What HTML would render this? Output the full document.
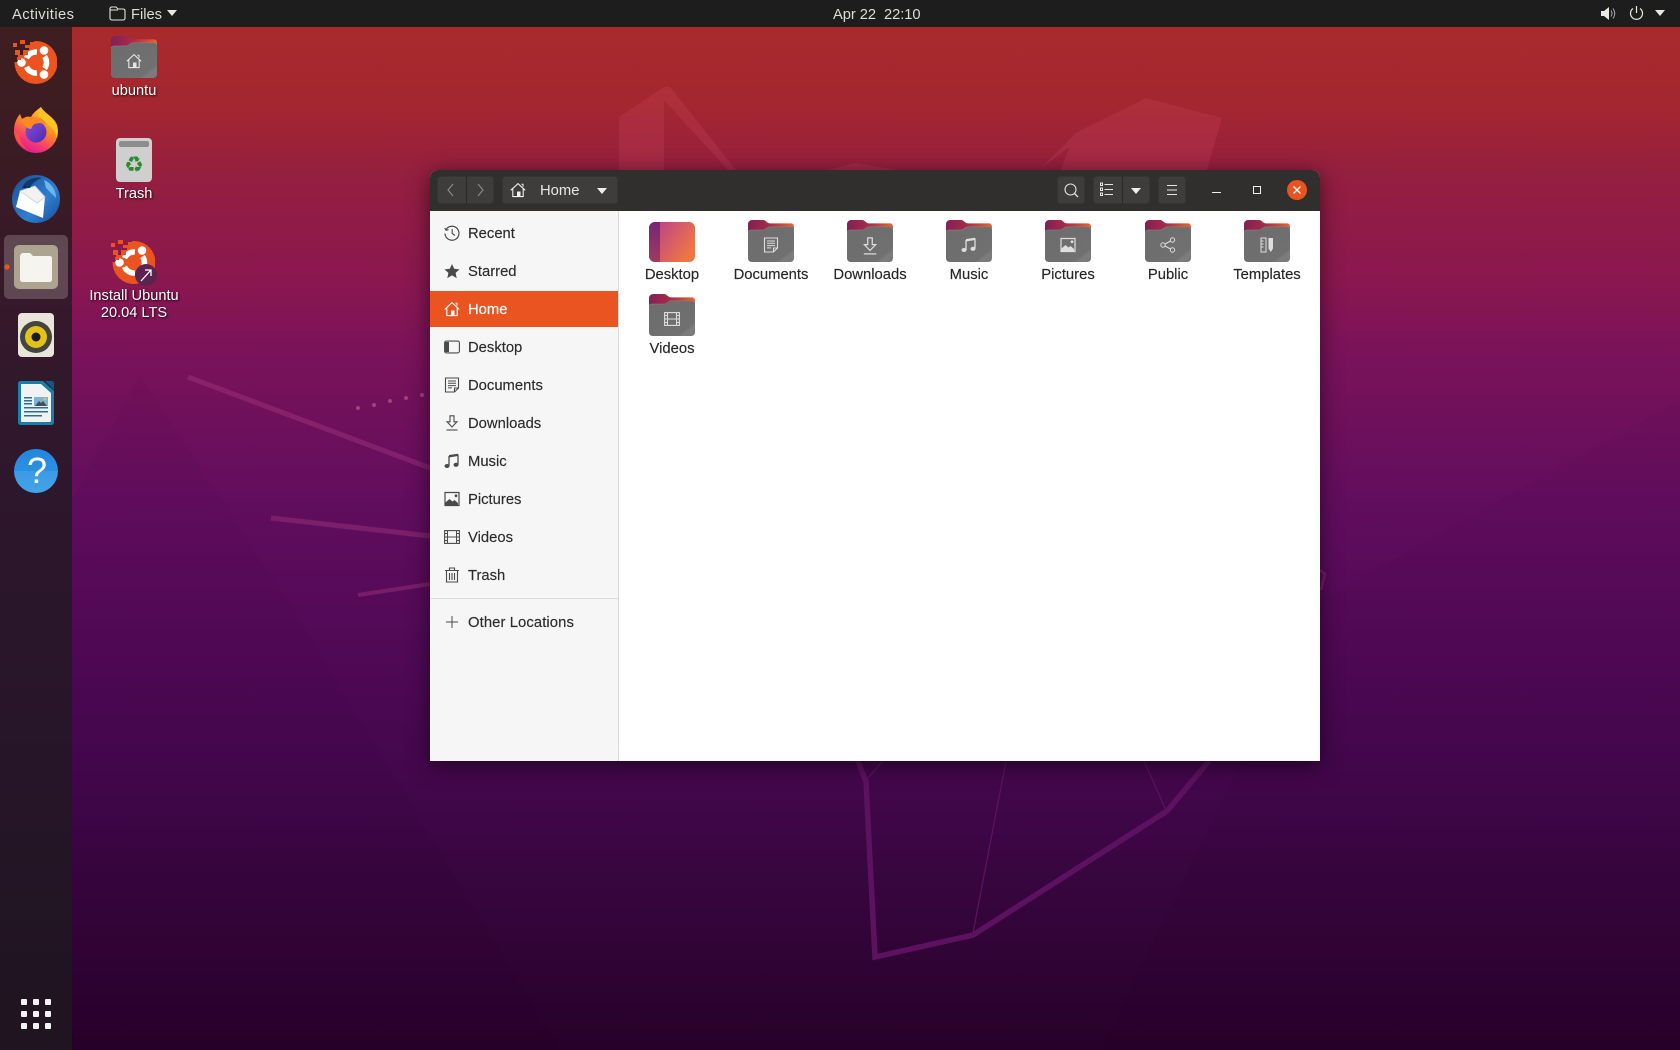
<!DOCTYPE html>
<html><head><meta charset="utf-8"><title>Ubuntu 20.04 Files</title>
<style>
html,body{margin:0;padding:0;width:1680px;height:1050px;overflow:hidden;background:#3a0540}
body{position:relative;font-family:"Liberation Sans",sans-serif;font-size:14.8px}
#wall{position:absolute;left:0;top:0}
.a{position:absolute}
.t{position:absolute;white-space:pre;line-height:18px}
.top{position:absolute;left:0;top:0;width:1680px;height:27px;background:#1d1d1d;color:#dcdcd8}
.top .t{top:6px;font-size:14.7px}
.dl{position:absolute;width:120px;text-align:center;color:#fff;line-height:17px;text-shadow:1px 1px 2px rgba(0,0,0,.85);font-size:14.6px}
#win{position:absolute;left:430px;top:170px;width:890px;height:591px;border-radius:8px 8px 0 0;box-shadow:0 4px 22px rgba(0,0,0,.55);background:#fff}
#hb{position:absolute;left:0;top:0;width:890px;height:41px;background:#302f2e;border-radius:8px 8px 0 0}
.btn{position:absolute;top:6px;height:28px;background:#3e3d3b;border-radius:4px;box-shadow:inset 0 0 0 1px #373635}
#side{position:absolute;left:0;top:41px;width:188px;height:550px;background:#f6f6f6;border-right:1px solid #d9d9d9}
.row{position:absolute;left:0;width:188px;height:38px;color:#2c2c2c;-webkit-text-stroke:.15px}
.row svg{position:absolute;left:14px;top:11px;width:16px;height:16px;color:#4a4a4a}
.row span{position:absolute;left:38px;top:10.500px;line-height:18px;white-space:pre}
.sel{background:#e95420;color:#fff;height:36px;margin-top:1px}
.sel span{top:9.500px}
.sel svg{color:#fff;top:10px}
.lab{position:absolute;width:100px;text-align:center;color:#262626;line-height:18px;-webkit-text-stroke:.15px}
</style></head><body>
<svg width="0" height="0" style="position:absolute">
<defs>
<linearGradient id="tab" x1="0" x2="1" y1="0" y2="0"><stop offset="0" stop-color="#7f2156"/><stop offset=".45" stop-color="#a82a48"/><stop offset="1" stop-color="#e9642a"/></linearGradient>
<linearGradient id="fr" x1="0" x2="1" y1="0" y2="1"><stop offset="0" stop-color="#6c6c6c"/><stop offset=".8" stop-color="#707070"/><stop offset=".86" stop-color="#7d7d7d"/><stop offset="1" stop-color="#777"/></linearGradient>
<linearGradient id="dk" x1="0" x2="1" y1="0" y2=".6"><stop offset="0" stop-color="#b13d92"/><stop offset="1" stop-color="#f17543"/></linearGradient>
<linearGradient id="dk2" x1="0" x2="0" y1="0" y2="1"><stop offset="0" stop-color="#742675"/><stop offset="1" stop-color="#a03a60"/></linearGradient>
<symbol id="folder" viewBox="0 0 46 42">
<path d="M4 0H15C18 0 19 3.4 22 3.4H43C45 3.4 46 5 46 7V20H0V4C0 2 2 0 4 0Z" fill="url(#tab)"/>
<path d="M0 12.5C0 11 1.5 10 3 10H15C18 10 19 6.8 22 6.8H43C45 6.8 46 8 46 10V38C46 40.5 44.5 42 42 42H4C1.5 42 0 40.5 0 38Z" fill="url(#fr)"/>
<path d="M0 12.5C0 11 1.5 10 3 10H15C18 10 19 6.8 22 6.8H43C45 6.8 46 8 46 10" fill="none" stroke="#8a8a8a" stroke-width=".7" opacity=".7"/>
</symbol>
<symbol id="i-home" viewBox="0 0 16 16"><path d="M.8 8.300 8 1.600l7.200 6.700M2.800 6.600v8h10.400v-8" fill="none" stroke="currentColor" stroke-width="1.100"/><rect x="7" y="9.500" width="3.500" height="5" fill="currentColor"/><path d="M11.500 2.300h1.500v2.500" fill="none" stroke="currentColor"/></symbol>
<symbol id="i-recent" viewBox="0 0 16 16"><path d="M2.200 4.300A7 7 0 1 1 1 8.500" fill="none" stroke="currentColor" stroke-width="1.200"/><path d="M.8 3 2 5.200 4.500 4.700M8.200 4v4.500l2.800 2" fill="none" stroke="currentColor" stroke-width="1.100"/></symbol>
<symbol id="i-star" viewBox="0 0 16 16"><path d="M8 1l2.200 4.800 5.300.6-3.900 3.500 1.100 5.200L8 12.400l-4.700 2.700 1.100-5.200L.5 6.400l5.300-.6z" fill="currentColor"/></symbol>
<symbol id="i-desk" viewBox="0 0 16 16"><rect x=".6" y="2.100" width="14.800" height="11.800" rx="1.800" fill="none" stroke="currentColor" stroke-width="1.100"/><path d="M1 3h4v10H1z" fill="currentColor"/></symbol>
<symbol id="i-doc" viewBox="0 0 16 16"><path d="M1.500 1h13v10l-4 4h-9zM14.500 11h-4v4" fill="none" stroke="currentColor" stroke-width="1.100"/><path d="M4 4h8M4 6.300h8M4 8.600h8M4 10.900h4" stroke="currentColor" stroke-width="1"/></symbol>
<symbol id="i-down" viewBox="0 0 16 16"><path d="M6 .8h4v6h3L8 12 3 6.800h3z" fill="none" stroke="currentColor" stroke-width="1.100"/><path d="M2.500 15h11" stroke="currentColor" stroke-width="1.100"/></symbol>
<symbol id="i-music" viewBox="0 0 16 16"><path d="M5 3v10M14 1.500V11.500M5 3.500 14 2" stroke="currentColor" stroke-width="1.300" fill="none"/><path d="M5 2 14 .8V3L5 4.500z" fill="currentColor"/><ellipse cx="3" cy="13" rx="2.500" ry="2" fill="currentColor"/><ellipse cx="12" cy="11.800" rx="2.500" ry="2" fill="currentColor"/></symbol>
<symbol id="i-pic" viewBox="0 0 16 16"><path d="M1 1.500h14v13H1z" fill="none" stroke="currentColor" stroke-width="1.200"/><path d="M1.500 14V11.500l4-3.500 3 2.500 2-1.500 3.500 3v2z" fill="currentColor"/><circle cx="12" cy="4.800" r="1.400" fill="currentColor"/></symbol>
<symbol id="i-vid" viewBox="0 0 16 16"><rect x=".6" y="1.600" width="14.800" height="12.800" fill="none" stroke="currentColor" stroke-width="1.100"/><path d="M3.500 1.600v12.800M12.500 1.600v12.800M3.500 8h9M.6 4.500h3M.6 8h3M.6 11.500h3M12.500 4.500h3M12.500 8h3M12.500 11.500h3" stroke="currentColor" fill="none"/></symbol>
<symbol id="i-trash" viewBox="0 0 16 16"><path d="M2.500 4v11h11V4M1 3.500h14M5.500 3.300V1h5v2.300M5.500 6v7M8 6v7M10.500 6v7" fill="none" stroke="currentColor" stroke-width="1.100"/></symbol>
<symbol id="i-share" viewBox="0 0 16 16"><g fill="none" stroke="currentColor" stroke-width="1"><circle cx="12.500" cy="3" r="2.200"/><circle cx="12.500" cy="13" r="2.200"/><circle cx="3" cy="8" r="2.200"/><path d="M5 7l5.600-3M5 9l5.600 3"/></g></symbol>
<symbol id="i-tpl" viewBox="0 0 16 16"><rect x="2" y="1" width="5" height="14" fill="none" stroke="currentColor"/><path d="M2 4h2.500M2 7h2.500M2 10h2.500" stroke="currentColor"/><path d="M9.500 1h4.500v10.500l-2.200 3.500-2.300-3.500z" fill="currentColor"/></symbol>
<symbol id="ubu" viewBox="0 0 44 44">
<mask id="um"><rect width="44" height="44" fill="#fff"/><path d="M0 0H21V5H16V10H10V15H5V22H0Z" fill="#000"/></mask>
<circle cx="23" cy="22.500" r="21.500" fill="#e95420" mask="url(#um)"/>
<g fill="none" stroke="#fff" stroke-width="5.500"><path d="M31.600 16.500A10.500 10.500 0 0 1 31.600 28.500"/><path d="M23.900 33A10.500 10.500 0 0 1 13.500 26.900"/><path d="M13.500 18.100A10.500 10.500 0 0 1 23.900 12"/></g>
<g fill="#fff"><circle cx="31" cy="10.500" r="4.300"/><circle cx="8.500" cy="22.500" r="4.300"/><circle cx="31" cy="34.500" r="4.300"/></g>
<g fill="#e95420"><rect x="0" y="3" width="4" height="4"/><rect x="7" y="0" width="5" height="4"/><rect x="17" y="2" width="5" height="4"/><rect x="2" y="10" width="5" height="5"/><rect x="10" y="10" width="5" height="5"/><rect x="4" y="17" width="4" height="3"/><rect x="12" y="5" width="4" height="3"/></g>
</symbol>
<linearGradient id="ffb" x1=".8" y1="0" x2=".3" y2="1"><stop offset="0" stop-color="#ffd02e"/><stop offset=".45" stop-color="#ff8a1e"/><stop offset=".8" stop-color="#f2327c"/><stop offset="1" stop-color="#d31f8a"/></linearGradient>
<linearGradient id="ffp" x1="0" x2="1" y1="0" y2="1"><stop offset="0" stop-color="#8a4bd8"/><stop offset="1" stop-color="#4a2bb0"/></linearGradient>
<linearGradient id="tb" x1="0" x2="1" y1="0" y2="1"><stop offset="0" stop-color="#1a4c8c"/><stop offset=".6" stop-color="#2f7fd0"/><stop offset="1" stop-color="#174a96"/></linearGradient>
<linearGradient id="hp" x1="0" x2="0" y1="0" y2="1"><stop offset="0" stop-color="#2287de"/><stop offset=".5" stop-color="#2c90e0"/><stop offset=".5" stop-color="#3c9ae4"/><stop offset="1" stop-color="#43a4e8"/></linearGradient>
<linearGradient id="wg" x1="0" x2="0" y1="0" y2="1">
<stop offset="0" stop-color="#ab2c2c"/><stop offset=".1" stop-color="#a4262f"/><stop offset=".165" stop-color="#951f3f"/><stop offset=".27" stop-color="#8a1750"/><stop offset=".33" stop-color="#7b1359"/><stop offset=".48" stop-color="#610d5e"/><stop offset=".62" stop-color="#500956"/><stop offset=".74" stop-color="#43074c"/><stop offset=".87" stop-color="#34053a"/><stop offset="1" stop-color="#27012a"/>
</linearGradient>
</defs>
</svg>

<svg id="wall" width="1680" height="1050" viewBox="0 0 1680 1050">
<rect width="1680" height="1050" fill="url(#wg)"/>
<g fill="#000" opacity=".018"><path d="M72 500 140 375 300 620 560 1050 72 1050Z"/><path d="M1320 600 1680 400V1050H1100Z"/></g>
<g fill="#d8506a" opacity=".2"><path d="M619 117 664 87 664 170 619 170Z"/><path d="M664 87 670 87 736 170 728 170 664 100Z"/><path d="M1146 98 1222 118 1207 170 1061 170 1069 147 1039 170 1077 132Z"/><path d="M855 163 897 170 828 170Z"/></g>
<g fill="none" stroke="#a63a80" opacity=".42"><path d="M188 377 430 468" stroke-width="5"/><path d="M271 518 430 536" stroke-width="5"/><path d="M358 595 430 584" stroke-width="4"/></g>
<g fill="#c05a90" opacity=".65"><circle cx="358" cy="408" r="2"/><circle cx="374" cy="405" r="2"/><circle cx="390" cy="401" r="2"/><circle cx="406" cy="398" r="2"/><circle cx="422" cy="395" r="2"/></g>
<g fill="none" stroke="#5c1260"><path d="M858 761 866 782 875 957 973 935 1167 811 1209 761" stroke-width="5.500" stroke-linejoin="miter"/><path d="M972 938 1006 761" stroke-width="1.300"/><path d="M1166 810 1144 761" stroke-width="1.300"/><path d="M866 780 883 761" stroke-width="1.300"/></g>
<path d="M1320 570 1325 574 1321 590" fill="none" stroke="#8a2a70" stroke-width="2.500" opacity=".6"/>
<!-- dock -->
<rect x="0" y="27" width="72" height="1023" fill="#1d1a1d" fill-opacity=".76"/>
<use href="#ubu" x="13" y="40" width="44" height="44"/>
<!-- firefox -->
<g>
<path d="M58 131A22 22 0 0 1 14 131C14 124 16 119 20 114L22 119C25 117 28 116 31 117 33 113 37 110 41 107 43 112 50 115 54 120 57 123 58 127 58 131Z" fill="url(#ffb)"/>
<path d="M41 107c3 6 12 9 15 18 2 5 2 9 1 13-2-8-8-14-15-17-4-2-5-8-1-14z" fill="#ffc426"/>
<circle cx="36" cy="132" r="10.500" fill="url(#ffp)"/>
<path d="M21 121c5-4 14-6 21-2 3 2 4 4 4 6-5-3-10-2-13 0l-2 4c-3 0-7-3-10-8z" fill="#ff8a24"/>
<path d="M14 131c0 8 6 15 14 19-6-5-9-10-8-15z" fill="#ff5a2a" opacity=".8"/>
</g>
<!-- thunderbird -->
<g>
<circle cx="36" cy="199" r="24" fill="url(#tb)"/>
<path d="M44 180c7 3 12 10 12 18-4-4-8-8-10-10z" fill="#6cb6ef"/>
<path d="M20 191l25 6-2 21-27-11z" fill="#fff"/>
<path d="M20 191l15-5 10 11-8 6z" fill="#f2f2f2" stroke="#c9d2dc" stroke-width=".8"/>
<path d="M22 188c2-7 12-12 20-10-6 2-11 6-12 10z" fill="#0e3a70"/>
<circle cx="25" cy="187" r="1" fill="#123"/>
</g>
<!-- files -->
<rect x="4" y="235" width="64" height="64" rx="5" fill="#fff" opacity=".2"/>
<circle cx="7" cy="267" r="2.700" fill="#e95420"/>
<rect x="14" y="245" width="44" height="44" rx="5" fill="#aca48f"/>
<path d="M20 257c0-2 1-4 3-4h7l3 3h17c1 0 2 1 2 2v21c0 2-1 3-3 3H23c-2 0-3-1-3-3z" fill="#f6f4ef"/>
<!-- rhythmbox -->
<rect x="18" y="313" width="36" height="44" rx="4" fill="#e9e5da"/>
<circle cx="36" cy="337" r="16" fill="#45453f"/><circle cx="36" cy="337" r="11" fill="#e3c118"/><circle cx="36" cy="337" r="4.500" fill="#1a1a1a"/>
<!-- writer -->
<path d="M21 381h22l11 10v31c0 2-1 3-3 3H21c-2 0-3-1-3-3v-38c0-2 1-3 3-3z" fill="#1a7ea6"/>
<path d="M21 384h20l10 9v27c0 2-1 2-2 2H22c-1 0-1-1-1-2z" fill="#f1f3f3"/>
<path d="M45 381h7c1 0 2 1 2 2v7z" fill="#0f5c83"/>
<g fill="#2a6d96"><rect x="24" y="397" width="8" height="1.500"/><rect x="24" y="400" width="8" height="1.500"/><rect x="24" y="403" width="8" height="1.500"/><rect x="24" y="407" width="24" height="1.500"/><rect x="24" y="411" width="24" height="1.500"/><rect x="24" y="415" width="18" height="1.500"/></g>
<rect x="34" y="397" width="14" height="9" fill="#7db4d6"/><path d="M35 406l4-5 2 2 2-2 4 5z" fill="#454d55"/><circle cx="45" cy="399" r="1.300" fill="#f0c040"/>
<!-- help -->
<circle cx="36" cy="471" r="22" fill="url(#hp)"/>
<g fill="#f4f2f4"><rect x="21" y="999" width="6" height="6" rx="1"/><rect x="33" y="999" width="6" height="6" rx="1"/><rect x="45" y="999" width="6" height="6" rx="1"/><rect x="21" y="1011" width="6" height="6" rx="1"/><rect x="33" y="1011" width="6" height="6" rx="1"/><rect x="45" y="1011" width="6" height="6" rx="1"/><rect x="21" y="1023" width="6" height="6" rx="1"/><rect x="33" y="1023" width="6" height="6" rx="1"/><rect x="45" y="1023" width="6" height="6" rx="1"/></g>
<!-- desktop icons -->
<use href="#folder" x="111" y="36" width="46" height="42"/>
<use href="#i-home" x="126" y="53" width="16" height="16" style="color:#e4e4e4"/>
<rect x="116" y="138" width="36" height="44" rx="4" fill="#cfcfcf"/>
<rect x="119" y="141" width="30" height="6" rx="2" fill="#8d8d8d"/>
<use href="#ubu" x="111" y="240" width="44" height="44"/>
<circle cx="146" cy="275" r="11" fill="#5b2450"/>
<path d="M141 281 151 270M145 270h6v6" fill="none" stroke="#fff" stroke-width="1.300"/>
</svg>

<div class="a" style="left:1px;top:450px;width:72px;text-align:center;color:#fff;font-size:36px;line-height:42px">?</div>
<div class="a" style="left:114px;top:152px;width:40px;text-align:center;color:#2a8a30;font:22px/28px 'DejaVu Sans',sans-serif">♻</div>

<div class="top">
<div class="t" style="left:12px;letter-spacing:.45px">Activities</div>
<svg class="a" style="left:109px;top:5px" width="17" height="16"><path d="M1 4c0-1 .6-2 2-2h4l2 2h5c1.500 0 2 1 2 2v7c0 1-.7 2-2 2H3c-1.300 0-2-1-2-2z" fill="none" stroke="#e4e4e0" stroke-width="1.100"/><path d="M1 5h8" stroke="#e4e4e0"/></svg>
<div class="t" style="left:131px">Files</div>
<svg class="a" style="left:167px;top:10px" width="10" height="6"><path d="M0 0h10L5 6z" fill="#e8e8e4"/></svg>
<div class="t" style="left:833px;letter-spacing:-.05px">Apr 22  22:10</div>
<svg class="a" style="left:1601px;top:6px" width="16" height="15"><path d="M0 5h3l5-4v13L3 10H0z" fill="#e8e8e4"/><path d="M10 4.500q2 3 0 6M12 2.500q3.500 5 0 10" stroke="#aaa" fill="none"/></svg>
<svg class="a" style="left:1629px;top:5px" width="15" height="16"><path d="M4 3.500a6 6 0 1 0 7 0M7.500 1v7" fill="none" stroke="#e8e8e4" stroke-width="1.200"/></svg>
<svg class="a" style="left:1655px;top:10px" width="10" height="6"><path d="M0 0h10L5 6z" fill="#e8e8e4"/></svg>
</div>

<div class="dl" style="left:74px;top:83px">ubuntu</div>
<div class="dl" style="left:74px;top:186px">Trash</div>
<div class="dl" style="left:74px;top:288px">Install Ubuntu<br>20.04 LTS</div>

<div id="win">
<div id="hb">
<div class="btn" style="left:7px;width:57px"></div>
<div class="a" style="left:36px;top:6px;width:1px;height:28px;background:#2a2928"></div>
<svg class="a" style="left:15px;top:13px" width="12" height="14"><path d="M8 1 3 7l5 6" fill="none" stroke="#8a8a88" stroke-width="1.100"/></svg>
<svg class="a" style="left:44px;top:13px" width="12" height="14"><path d="M4 1l5 6-5 6" fill="none" stroke="#8a8a88" stroke-width="1.100"/></svg>
<div class="btn" style="left:72px;width:116px"></div>
<svg class="a" style="left:80px;top:12px;color:#f0f0ee" width="16" height="16"><use href="#i-home" width="16" height="16"/></svg>
<div class="t" style="left:110px;top:12px;color:#e6e6e4">Home</div>
<svg class="a" style="left:167px;top:18px" width="10" height="6"><path d="M0 0h10L5 6z" fill="#eee"/></svg>
<div class="btn" style="left:627px;width:28px"></div>
<svg class="a" style="left:634px;top:13px" width="15" height="15"><circle cx="6.500" cy="6.500" r="5.500" fill="none" stroke="#e0e0de" stroke-width="1.100"/><path d="M10.500 10.500 14 14" stroke="#e0e0de" stroke-width="1.300"/></svg>
<div class="btn" style="left:663px;width:57px"></div>
<div class="a" style="left:692px;top:6px;width:1px;height:28px;background:#2a2928"></div>
<svg class="a" style="left:670px;top:12px" width="14" height="15"><path d="M4.500 2.500H13M4.500 7.500H13M4.500 12.500H13" stroke="#e6e6e4" stroke-width="1"/><path d="M.5 1h2v2.500h-2zM.5 6h2v2.500h-2zM.5 11h2v2.500h-2z" fill="none" stroke="#e6e6e4"/></svg>
<svg class="a" style="left:701px;top:18px" width="10" height="6"><path d="M0 0h10L5 6z" fill="#eee"/></svg>
<div class="btn" style="left:728px;width:28px"></div>
<svg class="a" style="left:735px;top:13px" width="14" height="14"><path d="M2 2.500H12M2 7H12M2 11.500H12" stroke="#e6e6e4" stroke-width="1"/></svg>
<div class="a" style="left:782px;top:22px;width:9px;height:1px;background:#eee"></div>
<div class="a" style="left:823px;top:16px;width:6px;height:6px;border:1.200px solid #eee"></div>
<div class="a" style="left:857px;top:10px;width:20px;height:20px;border-radius:50%;background:#e95420"></div>
<svg class="a" style="left:862px;top:15px" width="10" height="10"><path d="M1.500 1.500l7 7M8.500 1.500l-7 7" stroke="#fff" stroke-width="1.300"/></svg>
</div>

<div id="side">
<div class="row" style="top:3px"><svg><use href="#i-recent" width="16" height="16"/></svg><span>Recent</span></div>
<div class="row" style="top:41px"><svg><use href="#i-star" width="16" height="16"/></svg><span>Starred</span></div>
<div class="row sel" style="top:79px"><svg><use href="#i-home" width="16" height="16"/></svg><span>Home</span></div>
<div class="row" style="top:117px"><svg><use href="#i-desk" width="16" height="16"/></svg><span>Desktop</span></div>
<div class="row" style="top:155px"><svg><use href="#i-doc" width="16" height="16"/></svg><span>Documents</span></div>
<div class="row" style="top:193px"><svg><use href="#i-down" width="16" height="16"/></svg><span>Downloads</span></div>
<div class="row" style="top:231px"><svg><use href="#i-music" width="16" height="16"/></svg><span>Music</span></div>
<div class="row" style="top:269px"><svg><use href="#i-pic" width="16" height="16"/></svg><span>Pictures</span></div>
<div class="row" style="top:307px"><svg><use href="#i-vid" width="16" height="16"/></svg><span>Videos</span></div>
<div class="row" style="top:345px"><svg><use href="#i-trash" width="16" height="16"/></svg><span>Trash</span></div>
<div class="a" style="left:0;top:387px;width:188px;height:1px;background:#dcdcdc"></div>
<div class="row" style="top:392px"><svg><path d="M8 2v12M2 8h12" stroke="#4a4a4a" stroke-width="1"/></svg><span style="letter-spacing:.1px">Other Locations</span></div>
</div>

<svg class="a" style="left:189px;top:41px" width="701" height="170" viewBox="0 0 701 170">
<rect x="30" y="11" width="46" height="40" rx="6" fill="url(#dk)"/>
<path d="M36 11h5v40h-5a6 6 0 0 1-6-6V17a6 6 0 0 1 6-6z" fill="url(#dk2)"/>
<use href="#folder" x="129" y="9" width="46" height="42"/>
<use href="#folder" x="228" y="9" width="46" height="42"/>
<use href="#folder" x="327" y="9" width="46" height="42"/>
<use href="#folder" x="426" y="9" width="46" height="42"/>
<use href="#folder" x="526" y="9" width="46" height="42"/>
<use href="#folder" x="625" y="9" width="46" height="42"/>
<use href="#folder" x="30" y="83" width="46" height="42"/>
<g style="color:#dedede">
<use href="#i-doc" x="144" y="26" width="16" height="16"/>
<use href="#i-down" x="242" y="26" width="18" height="18"/>
<use href="#i-music" x="342" y="26" width="16" height="16"/>
<use href="#i-pic" x="441" y="26" width="16" height="16"/>
<use href="#i-share" x="541" y="26" width="16" height="16"/>
<use href="#i-tpl" x="640" y="26" width="16" height="16"/>
<use href="#i-vid" x="45" y="100" width="16" height="16"/>
</g>
</svg>

<div class="lab" style="left:192px;top:96px">Desktop</div>
<div class="lab" style="left:291px;top:96px">Documents</div>
<div class="lab" style="left:390px;top:96px">Downloads</div>
<div class="lab" style="left:489px;top:96px">Music</div>
<div class="lab" style="left:588px;top:96px">Pictures</div>
<div class="lab" style="left:688px;top:96px">Public</div>
<div class="lab" style="left:787px;top:96px">Templates</div>
<div class="lab" style="left:192px;top:170px">Videos</div>
</div>
</body></html>
